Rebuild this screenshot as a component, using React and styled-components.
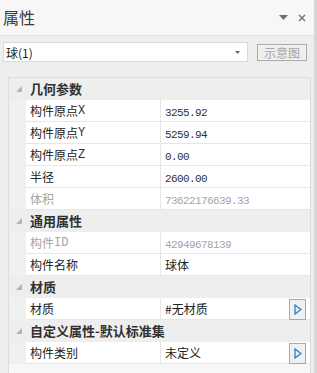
import React from 'react'
import styled, { createGlobalStyle } from 'styled-components'

const Global = createGlobalStyle`
  body {
    margin: 0;
    background: #eeeeee;
    font-family: "Noto Sans CJK SC", "Liberation Sans", sans-serif;
  }
`

const Panel = styled.div`
  width: 317px;
  height: 373px;
  box-sizing: border-box;
  border-right: 3px solid #d6d6d6;
  background: #eeeeee;
  display: flex;
  flex-direction: column;
  overflow: hidden;
`

const TitleBar = styled.div`
  height: 35px;
  flex: none;
  background: #f7f7f7;
  border-bottom: 1px solid #e3e3e3;
  display: flex;
  align-items: center;
  padding: 0 8px 0 3px;
`

const Title = styled.div`
  flex: 1;
  font-size: 16px;
  color: #3a3a3a;
  line-height: 1;
  margin-top: -1px;
`

const TitleTools = styled.div`
  display: flex;
  align-items: center;
  gap: 10px;
  color: #6a6a6a;
`

const Toolbar = styled.div`
  display: flex;
  align-items: center;
  padding: 6px 0 0 3px;
  height: 20px;
`

const Combo = styled.div`
  width: 245px;
  height: 20px;
  box-sizing: border-box;
  border: 1px solid #d9d9d9;
  background: #ffffff;
  display: flex;
  align-items: center;
  padding: 0 7px 0 2px;
  font-size: 12px;
  color: #222;
`

const ComboText = styled.span`
  flex: 1;
`

const PicButton = styled.div`
  margin-left: 9px;
  width: 50px;
  height: 17px;
  box-sizing: border-box;
  border: 1px solid #a9a9a9;
  box-shadow: inset 0 0 0 1px #f4f4f4;
  display: flex;
  align-items: center;
  justify-content: center;
  font-size: 12px;
  color: #a6a6a6;
`

const Grid = styled.div`
  margin: 15px 0 0 8px;
  width: 303px;
  flex: 1;
  box-sizing: border-box;
  border: 1px solid #dcdcdc;
  border-bottom: none;
  background: #f7f7f7;
`

const Row = styled.div`
  display: flex;
  height: 22px;
  box-sizing: border-box;
  background: ${({ header }) => (header ? '#eeeeee' : '#f0f0f0')};
`

const Gutter = styled.div`
  width: 17px;
  flex: none;
  display: flex;
  align-items: center;
  justify-content: center;
  padding-left: 2px;
  box-sizing: border-box;
`

const GroupTitle = styled.div`
  padding-left: 4px;
  font-size: 13px;
  font-weight: bold;
  color: #303030;
  line-height: 22px;
  white-space: nowrap;
`

const Cell = styled.div`
  width: ${({ wide }) => (wide ? '150px' : '134px')};
  flex: none;
  box-sizing: border-box;
  background: #ffffff;
  border-bottom: 1px solid #e6e6e6;
  border-left: ${({ wide }) => (wide ? '1px solid #e6e6e6' : 'none')};
  padding-left: 4px;
  display: flex;
  align-items: center;
  font-size: 12px;
  color: ${({ dim }) => (dim ? '#a5a5a5' : '#222')};
  white-space: nowrap;
`

const Mono = styled.span`
  font-family: "Liberation Mono", "DejaVu Sans Mono", monospace;
  font-size: ${({ label }) => (label ? '12px' : '11px')};
  letter-spacing: ${({ label }) => (label ? '0' : '-0.6px')};
  color: ${({ dim }) => (dim ? '#a5a5a5' : '#333')};
`

const ValueText = styled.span`
  flex: 1;
`

const MoreButton = styled.div`
  width: 17px;
  height: 21px;
  box-sizing: border-box;
  border: 1px solid #a8a8a8;
  background: #f0f0f0;
  display: flex;
  align-items: center;
  justify-content: center;
  margin-right: 4px;
  margin-top: 1px;
`

const Expander = () => (
  <svg width="6" height="6" viewBox="0 0 6 6">
    <polygon points="6,0 6,6 0,6" fill="#b4b4b4" />
  </svg>
)

const Arrow = () => (
  <svg width="8" height="11" viewBox="0 0 8 11">
    <polygon points="1,1 7,5.5 1,10" fill="none" stroke="#2f7dc0" strokeWidth="1.3" />
  </svg>
)

const groups = [
  {
    title: '几何参数',
    rows: [
      { label: '构件原点', tag: 'X', value: '3255.92', mono: true },
      { label: '构件原点', tag: 'Y', value: '5259.94', mono: true },
      { label: '构件原点', tag: 'Z', value: '0.00', mono: true },
      { label: '半径', value: '2600.00', mono: true },
      { label: '体积', value: '73622176639.33', mono: true, dim: true },
    ],
  },
  {
    title: '通用属性',
    rows: [
      { label: '构件', tag: 'ID', value: '42949678139', mono: true, dim: true },
      { label: '构件名称', value: '球体' },
    ],
  },
  {
    title: '材质',
    rows: [{ label: '材质', value: '#无材质', more: true }],
  },
  {
    title: '自定义属性-默认标准集',
    rows: [{ label: '构件类别', value: '未定义', more: true }],
  },
]

export default function App() {
  return (
    <Panel>
      <Global />
      <TitleBar>
        <Title>属性</Title>
        <TitleTools>
          <svg width="9" height="6" viewBox="0 0 9 6">
            <polygon points="0,0 9,0 4.5,5" fill="#707070" />
          </svg>
          <svg width="8" height="8" viewBox="0 0 8 8">
            <path d="M1 1 L7 7 M7 1 L1 7" stroke="#707070" strokeWidth="1.4" />
          </svg>
        </TitleTools>
      </TitleBar>
      <Toolbar>
        <Combo>
          <ComboText>球(1)</ComboText>
          <svg width="5" height="3" viewBox="0 0 5 3">
            <polygon points="0,0 5,0 2.5,3" fill="#666" />
          </svg>
        </Combo>
        <PicButton>示意图</PicButton>
      </Toolbar>
      <Grid>
        {groups.map((g) => (
          <React.Fragment key={g.title}>
            <Row header>
              <Gutter>
                <Expander />
              </Gutter>
              <GroupTitle>{g.title}</GroupTitle>
            </Row>
            {g.rows.map((r) => (
              <Row key={r.label + (r.tag || '')}>
                <Gutter />
                <Cell dim={r.dim}>
                  {r.label}
                  {r.tag && (
                    <Mono label dim={r.dim}>
                      {r.tag}
                    </Mono>
                  )}
                </Cell>
                <Cell wide dim={r.dim}>
                  <ValueText>{r.mono ? <Mono dim={r.dim}>{r.value}</Mono> : r.value}</ValueText>
                  {r.more && (
                    <MoreButton>
                      <Arrow />
                    </MoreButton>
                  )}
                </Cell>
              </Row>
            ))}
          </React.Fragment>
        ))}
      </Grid>
    </Panel>
  )
}
